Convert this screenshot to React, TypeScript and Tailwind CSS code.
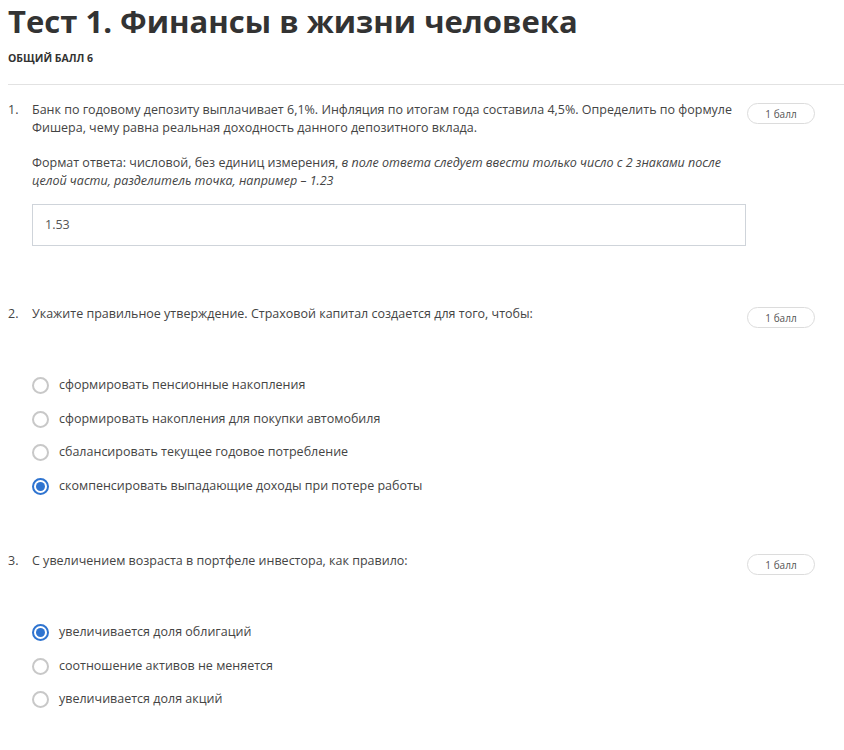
import React from "react"

type Question = {
    id: number
    text: string
    kind: "input" | "radio"
    value?: string
    options?: string[]
    selected?: number
}

const questions: Question[] = [
    {
        id: 1,
        text: "Банк по годовому депозиту выплачивает 6,1%. Инфляция по итогам года составила 4,5%. Определить по формуле Фишера, чему равна реальная доходность данного депозитного вклада.",
        kind: "input",
        value: "1.53",
    },
    {
        id: 2,
        text: "Укажите правильное утверждение. Страховой капитал создается для того, чтобы:",
        kind: "radio",
        options: [
            "сформировать пенсионные накопления",
            "сформировать накопления для покупки автомобиля",
            "сбалансировать текущее годовое потребление",
            "скомпенсировать выпадающие доходы при потере работы",
        ],
        selected: 3,
    },
    {
        id: 3,
        text: "С увеличением возраста в портфеле инвестора, как правило:",
        kind: "radio",
        options: [
            "увеличивается доля облигаций",
            "соотношение активов не меняется",
            "увеличивается доля акций",
        ],
        selected: 0,
    },
]

function Radio({ checked }: { checked: boolean }) {
    return checked ? (
        <span className="flex h-[17px] w-[17px] shrink-0 items-center justify-center rounded-full border-2 border-[#2f74d0]">
            <span className="h-[9px] w-[9px] rounded-full bg-[#2f74d0]" />
        </span>
    ) : (
        <span className="h-[17px] w-[17px] shrink-0 rounded-full border-2 border-[#c8c8c8]" />
    )
}

function Badge() {
    return (
        <div className="mt-[2px] flex h-[21px] w-[68px] shrink-0 items-center justify-center rounded-full border border-[#dcdcdc] text-[10px] text-[#555]">
            1 балл
        </div>
    )
}

export default function App() {
    return (
        <div className="min-h-[750px] bg-white pl-2 font-['Open_Sans',sans-serif] text-[#444]">
            <h1 className="pt-[2px] text-[31px] font-bold leading-[38px] text-[#333]">
                Тест 1. Финансы в жизни человека
            </h1>
            <div className="mt-[11px] text-[10.5px] font-bold uppercase leading-[14px] text-[#333]">Общий балл 6</div>
            <div className="mt-[19px] border-t border-[#e2e2e2]" />

            <div className="pt-4">
                {questions.map((q) => (
                    <div key={q.id} className={q.kind === "input" ? "mb-[59px]" : "mb-[49px]"}>
                        <div className="flex text-[12.5px] leading-[18px]">
                            <div className="w-6 shrink-0">{q.id}.</div>
                            <div className="w-[714px] shrink-0">
                                <p>{q.text}</p>
                                {q.kind === "input" && (
                                    <>
                                        <p className="mt-[17px]">
                                            Формат ответа: числовой, без единиц измерения,{" "}
                                            <i>в поле ответа следует ввести только число с 2 знаками после целой части, разделитель точка, например – 1.23</i>
                                        </p>
                                        <div className="mt-[14px] flex h-[42px] items-center border border-[#cfd4da] px-3 text-[#555]">
                                            {q.value}
                                        </div>
                                    </>
                                )}
                            </div>
                            <div className="ml-px">
                                <Badge />
                            </div>
                        </div>

                        {q.kind === "radio" && (
                            <div className="ml-6 mt-[41px] flex flex-col">
                                {q.options!.map((opt, i) => (
                                    <div key={i} className="flex h-[33.5px] items-center gap-[10px] text-[12.5px]">
                                        <Radio checked={i === q.selected} />
                                        <span>{opt}</span>
                                    </div>
                                ))}
                            </div>
                        )}
                    </div>
                ))}
            </div>
        </div>
    )
}
